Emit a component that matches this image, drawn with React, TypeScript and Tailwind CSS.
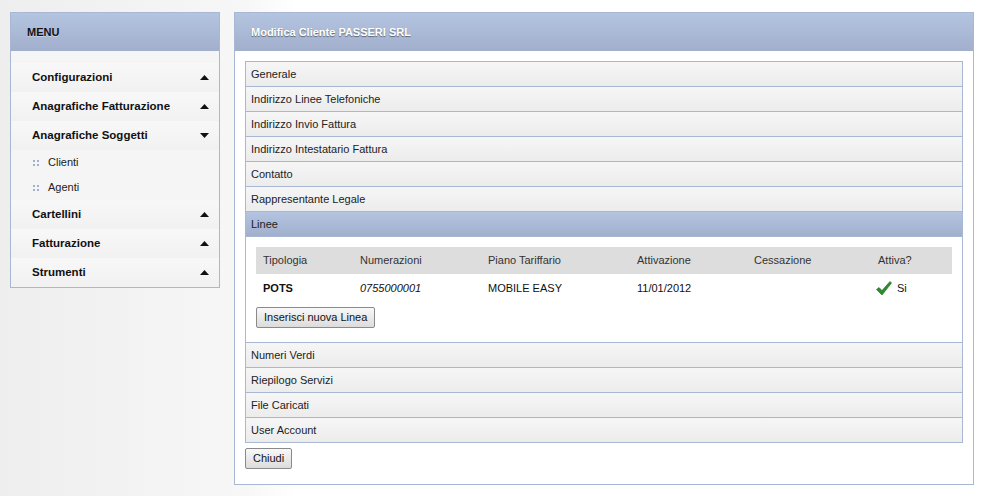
import React from "react";

const font = { fontFamily: '"Liberation Sans", Arial, sans-serif' };

type MenuItem = { label: string; open?: boolean; children?: string[] };

const menu: MenuItem[] = [
  { label: "Configurazioni" },
  { label: "Anagrafiche Fatturazione" },
  { label: "Anagrafiche Soggetti", open: true, children: ["Clienti", "Agenti"] },
  { label: "Cartellini" },
  { label: "Fatturazione" },
  { label: "Strumenti" },
];

const sectionsTop = [
  "Generale",
  "Indirizzo Linee Telefoniche",
  "Indirizzo Invio Fattura",
  "Indirizzo Intestatario Fattura",
  "Contatto",
  "Rappresentante Legale",
];

const sectionsBottom = ["Numeri Verdi", "Riepilogo Servizi", "File Caricati", "User Account"];

function Arrow(props: { down?: boolean }) {
  return (
    <svg width="9" height="5" viewBox="0 0 9 5" className="mr-[10px]">
      {props.down ? (
        <polygon points="0,0 9,0 4.5,5" fill="#111" />
      ) : (
        <polygon points="0,5 9,5 4.5,0" fill="#111" />
      )}
    </svg>
  );
}

function Dots() {
  return (
    <svg width="6" height="6" viewBox="0 0 6 6" className="mr-[9px] ml-[1px]">
      <rect x="0" y="0" width="2" height="2" fill="#9fb0d0" />
      <rect x="4" y="0" width="2" height="2" fill="#9fb0d0" />
      <rect x="0" y="4" width="2" height="2" fill="#9fb0d0" />
      <rect x="4" y="4" width="2" height="2" fill="#9fb0d0" />
    </svg>
  );
}

function Check() {
  return (
    <svg width="16" height="15" viewBox="0 0 16 15" className="mr-[5px]">
      <path d="M0.5 8.5 L3 6.5 L6 9.5 L14 0.5 L15.5 2 L6 14 Z" fill="#2e8b2e" stroke="#1f6b1f" strokeWidth="0.6" />
    </svg>
  );
}

function Row(props: { label: string }) {
  return (
    <div className="h-[25px] flex items-center pl-[5px] border-t border-[#a8b7d3] bg-gradient-to-b from-[#f6f6f6] to-[#ececec] text-[11px] text-[#222]">
      {props.label}
    </div>
  );
}

function Button(props: { label: string }) {
  return (
    <button className="h-[21px] px-[7px] rounded-[2px] border border-[#8a8a8a] bg-gradient-to-b from-[#f8f8f8] to-[#dcdcdc] text-[11px] text-[#111] leading-none">
      {props.label}
    </button>
  );
}

export default function App() {
  return (
    <div
      className="w-[987px] h-[496px] bg-gradient-to-r from-[#eeeeee] via-[#f7f7f7] via-[25%] to-white to-[30%] flex items-start gap-[14px] pl-[10px] pt-[12px]"
      style={font}
    >
      <aside className="w-[210px] h-[276px] border border-[#a8b7d3] bg-[#f5f5f5] flex flex-col">
        <div className="h-[38px] shrink-0 flex items-center pl-[16px] bg-gradient-to-b from-[#b3c4e1] to-[#a1afcc] text-[11px] font-bold text-[#111] [text-shadow:0_1px_0_rgba(255,255,255,0.4)]">
          MENU
        </div>
        <nav className="pt-[12px] flex flex-col">
          {menu.map((m) => (
            <div key={m.label}>
              <div className="h-[29px] flex items-center justify-between pl-[21px] bg-gradient-to-b from-[#f8f8f8] to-[#f1f1f1] text-[11.5px] font-bold text-[#111]">
                <span>{m.label}</span>
                <Arrow down={m.open} />
              </div>
              {m.children?.map((c) => (
                <div key={c} className="h-[25px] flex items-center pl-[21px] text-[11px] text-[#222]">
                  <Dots />
                  {c}
                </div>
              ))}
            </div>
          ))}
        </nav>
      </aside>

      <main className="w-[740px] h-[473px] border border-[#a8b7d3] bg-white flex flex-col">
        <div className="h-[38px] shrink-0 flex items-center pl-[16px] bg-gradient-to-b from-[#b3c4e1] to-[#a1afcc] text-[11px] font-bold text-white [text-shadow:0_1px_1px_rgba(0,0,0,0.45)]">
          Modifica Cliente PASSERI SRL
        </div>
        <div className="px-[10px] pt-[10px]">
          <div className="border border-[#a8b7d3] border-t-0">
            {sectionsTop.map((s) => (
              <Row key={s} label={s} />
            ))}
            <div className="h-[25px] flex items-center pl-[5px] border-t border-[#a8b7d3] bg-gradient-to-b from-[#b3c4e1] to-[#a1afcc] text-[11px] text-[#222]">
              Linee
            </div>
            <div className="border-t border-[#a8b7d3] px-[10px] pt-[10px] h-[106px]">
              <div className="grid grid-cols-[97px_128px_149px_117px_124px_1fr] text-[11px]">
                <div className="contents text-[#333]">
                  {["Tipologia", "Numerazioni", "Piano Tariffario", "Attivazione", "Cessazione", "Attiva?"].map((h) => (
                    <div key={h} className="h-[27px] flex items-center pl-[7px] bg-[#dddddd]">
                      {h}
                    </div>
                  ))}
                </div>
                <div className="h-[29px] flex items-center pl-[7px] font-bold text-[#111]">POTS</div>
                <div className="h-[29px] flex items-center pl-[7px] italic text-[#111]">0755000001</div>
                <div className="h-[29px] flex items-center pl-[7px] text-[#111]">MOBILE EASY</div>
                <div className="h-[29px] flex items-center pl-[7px] text-[#111]">11/01/2012</div>
                <div className="h-[29px]" />
                <div className="h-[29px] flex items-center pl-[5px] text-[#111]">
                  <Check />
                  Si
                </div>
              </div>
              <div className="mt-[4px] flex">
                <Button label="Inserisci nuova Linea" />
              </div>
            </div>
            {sectionsBottom.map((s) => (
              <Row key={s} label={s} />
            ))}
          </div>
          <div className="mt-[5px] flex">
            <Button label="Chiudi" />
          </div>
        </div>
      </main>
    </div>
  );
}
